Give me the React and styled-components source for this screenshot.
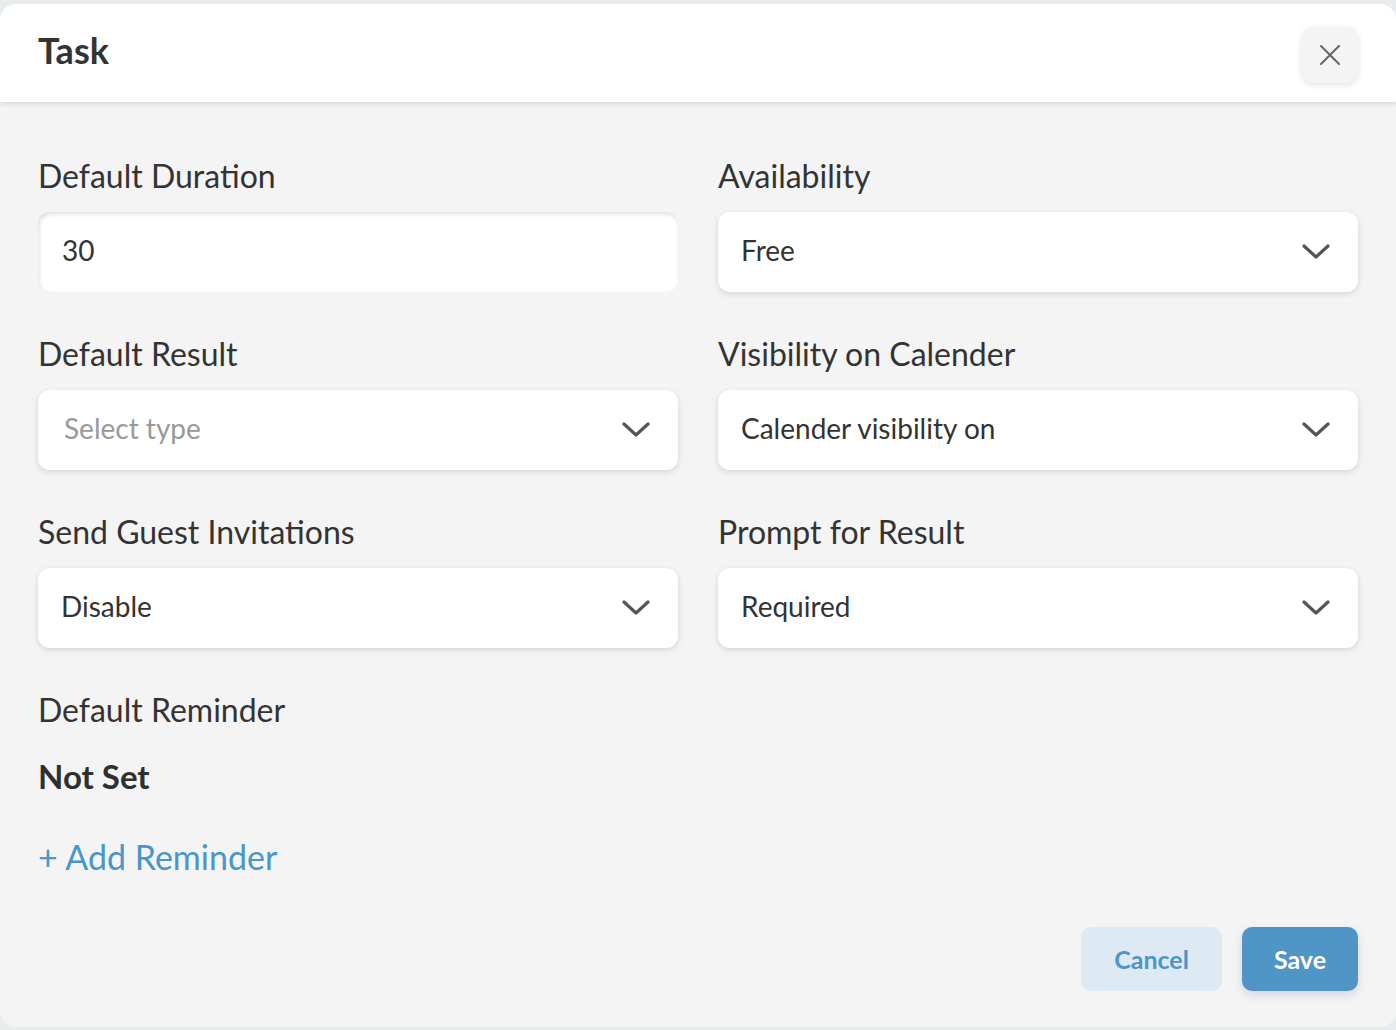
import React from "react";
import styled, { createGlobalStyle } from "styled-components";

const GlobalStyle = createGlobalStyle`
  html, body {
    margin: 0;
    padding: 0;
    background: #e9ecec;
  }
  * {
    box-sizing: border-box;
  }
  body {
    font-family: Lato, "Noto Sans", sans-serif;
    color: #333;
  }
`;

const Modal = styled.div`
  margin-top: 4px;
  width: 1396px;
  height: 1023px;
  background: #f4f4f4;
  border-radius: 16px;
  overflow: hidden;
  display: flex;
  flex-direction: column;
`;

const Header = styled.div`
  height: 98px;
  background: #fff;
  display: flex;
  align-items: center;
  justify-content: space-between;
  padding: 0 38px;
  box-shadow: 0 2px 5px rgba(0, 0, 0, 0.12);
  position: relative;
  z-index: 1;
`;

const Title = styled.h1`
  margin: 0 0 6px;
  font-size: 36px;
  font-weight: 700;
  color: #333;
`;

const CloseButton = styled.button`
  width: 56px;
  height: 56px;
  border: none;
  border-radius: 12px;
  background: #f4f4f4;
  box-shadow: 0 2px 6px rgba(0, 0, 0, 0.12);
  display: flex;
  align-items: center;
  justify-content: center;
  cursor: pointer;
  margin-top: 4px;
`;

const Body = styled.div`
  flex: 1;
  padding: 54px 38px 36px;
  display: flex;
  flex-direction: column;
`;

const Grid = styled.div`
  display: grid;
  grid-template-columns: 1fr 1fr;
  column-gap: 40px;
  row-gap: 42px;
`;

const Field = styled.div`
  display: flex;
  flex-direction: column;
`;

const Label = styled.div`
  font-size: 32px;
  line-height: 40px;
  color: #333;
  margin-bottom: 16px;
`;

const Control = styled.div`
  height: 80px;
  background: #fff;
  border-radius: 12px;
  display: flex;
  align-items: center;
  justify-content: space-between;
  padding: 0 28px 0 ${(p) => p.$indent || 23}px;
  font-size: 28px;
  color: ${(p) => (p.$placeholder ? "#999" : "#333")};
  box-shadow: ${(p) =>
    p.$inset
      ? "inset 1px 2px 4px rgba(0,0,0,0.14)"
      : "0 2px 6px rgba(0,0,0,0.13)"};

  & > span {
    margin-bottom: 4px;
  }
`;

const Reminder = styled.div`
  margin-top: 42px;
  display: flex;
  flex-direction: column;
`;

const NotSet = styled.div`
  margin-top: 10px;
  font-size: 33px;
  font-weight: 700;
  color: #2f2f2f;
`;

const AddLink = styled.a`
  margin-top: 40px;
  font-size: 34px;
  color: #4a96c8;
  text-decoration: none;
  cursor: pointer;
`;

const Footer = styled.div`
  margin-top: auto;
  display: flex;
  justify-content: flex-end;
  gap: 20px;
`;

const Button = styled.button`
  height: 64px;
  padding: 0 ${(p) => (p.$primary ? 32 : 33)}px;
  border: none;
  border-radius: 10px;
  font-family: Lato, "Noto Sans", sans-serif;
  font-size: 25px;
  font-weight: 700;
  cursor: pointer;
  background: ${(p) => (p.$primary ? "#4f95c5" : "#ddeaf4")};
  color: ${(p) => (p.$primary ? "#fff" : "#4f95c5")};
  box-shadow: ${(p) =>
    p.$primary ? "0 4px 10px rgba(80, 70, 160, 0.18)" : "none"};
`;

const Chevron = () => (
  <svg width="28" height="18" viewBox="0 0 28 18" fill="none">
    <path
      d="M2 3 L14 14 L26 3"
      stroke="#555"
      strokeWidth="3.2"
      strokeLinecap="round"
      strokeLinejoin="round"
    />
  </svg>
);

const CloseIcon = () => (
  <svg width="22" height="22" viewBox="0 0 22 22" fill="none">
    <path d="M2 2 L20 20 M20 2 L2 20" stroke="#666" strokeWidth="2" strokeLinecap="round" />
  </svg>
);

const SelectField = ({ label, value, placeholder, indent }) => (
  <Field>
    <Label>{label}</Label>
    <Control $placeholder={placeholder} $indent={indent}>
      <span>{value}</span>
      <Chevron />
    </Control>
  </Field>
);

export default function App() {
  return (
    <>
      <GlobalStyle />
      <Modal>
        <Header>
          <Title>Task</Title>
          <CloseButton aria-label="Close">
            <CloseIcon />
          </CloseButton>
        </Header>
        <Body>
          <Grid>
            <Field>
              <Label>Default Duration</Label>
              <Control $inset $indent={24}>
                <span>30</span>
              </Control>
            </Field>
            <SelectField label="Availability" value="Free" />
            <SelectField label="Default Result" value="Select type" placeholder indent={26} />
            <SelectField label="Visibility on Calender" value="Calender visibility on" />
            <SelectField label="Send Guest Invitations" value="Disable" />
            <SelectField label="Prompt for Result" value="Required" />
          </Grid>
          <Reminder>
            <Label>Default Reminder</Label>
            <NotSet>Not Set</NotSet>
            <AddLink>+ Add Reminder</AddLink>
          </Reminder>
          <Footer>
            <Button>Cancel</Button>
            <Button $primary>Save</Button>
          </Footer>
        </Body>
      </Modal>
    </>
  );
}
